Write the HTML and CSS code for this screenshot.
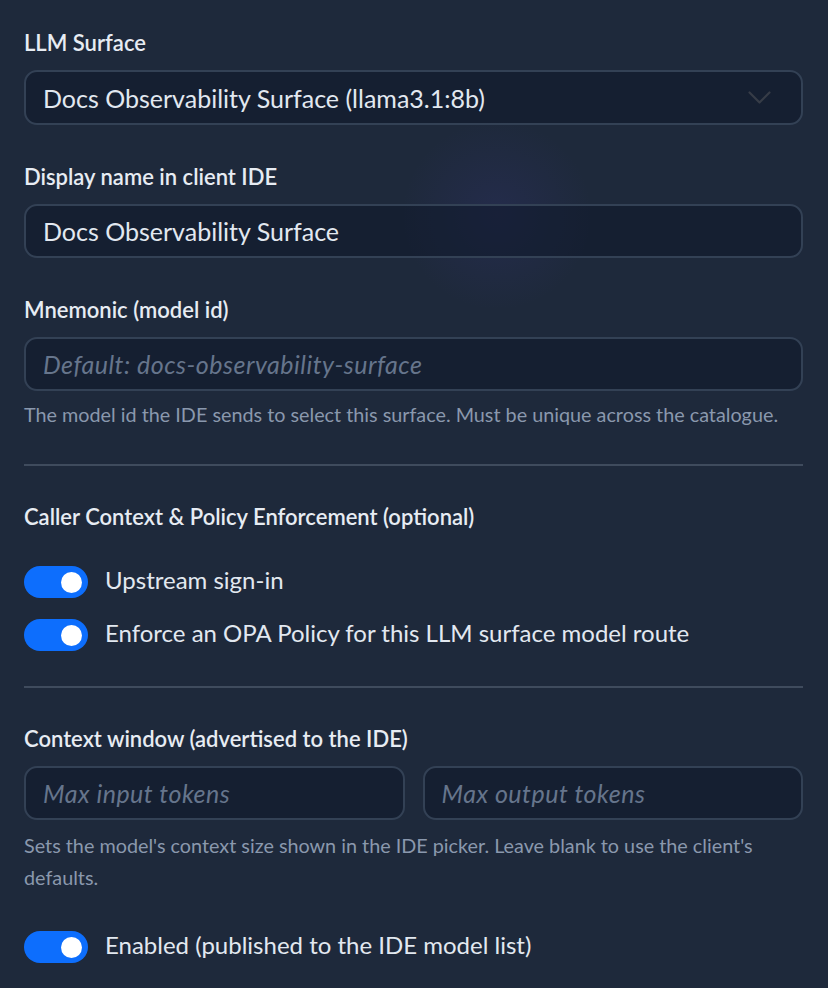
FILE: index.html
```html
<!DOCTYPE html>
<html lang="en">
<head>
<meta charset="utf-8">
<title>LLM Surface</title>
<link rel="stylesheet" href="styles.css">
</head>
<body>
<main class="form">
  <div class="field">
    <label class="label">LLM Surface</label>
    <div class="control select">
      <span class="value">Docs Observability Surface (llama3.1:8b)</span>
      <svg class="chevron" width="23" height="13" viewBox="0 0 23 13" aria-hidden="true"><polyline points="1.5,1.5 11.5,11.5 21.5,1.5" fill="none" stroke="#363c47" stroke-width="2.2" stroke-linecap="round" stroke-linejoin="round"/></svg>
    </div>
  </div>

  <div class="field">
    <label class="label">Display name in client IDE</label>
    <div class="control"><span class="value">Docs Observability Surface</span></div>
  </div>

  <div class="field">
    <label class="label">Mnemonic (model id)</label>
    <div class="control"><span class="placeholder">Default: docs-observability-surface</span></div>
    <p class="help">The model id the IDE sends to select this surface. Must be unique across the catalogue.</p>
  </div>

  <hr class="divider">

  <section class="group">
    <h3 class="label heading">Caller Context &amp; Policy Enforcement (optional)</h3>
    <div class="toggles">
      <div class="toggle-row"><span class="switch"><span class="knob"></span></span><span class="toggle-text">Upstream sign-in</span></div>
      <div class="toggle-row"><span class="switch"><span class="knob"></span></span><span class="toggle-text">Enforce an OPA Policy for this LLM surface model route</span></div>
    </div>
  </section>

  <hr class="divider">

  <div class="field">
    <label class="label">Context window (advertised to the IDE)</label>
    <div class="pair">
      <div class="control"><span class="placeholder">Max input tokens</span></div>
      <div class="control"><span class="placeholder">Max output tokens</span></div>
    </div>
    <p class="help two">Sets the model's context size shown in the IDE picker. Leave blank to use the client's defaults.</p>
  </div>

  <div class="toggle-row last"><span class="switch"><span class="knob"></span></span><span class="toggle-text">Enabled (published to the IDE model list)</span></div>
</main>
</body>
</html>
```

FILE: styles.css
```css
* { box-sizing: border-box; }

html, body {
  margin: 0;
  padding: 0;
}

body {
  width: 828px;
  min-height: 988px;
  background:
    radial-gradient(circle at 497px 215px, rgba(70, 60, 170, 0.15) 0, rgba(70, 60, 170, 0.07) 50px, rgba(70, 60, 170, 0) 95px),
    #1e293b;
  font-family: "Lato", "Noto Sans", sans-serif;
  color: #e2e8f0;
  overflow: hidden;
}

.form {
  padding: 29px 25px 0 24px;
  display: flex;
  flex-direction: column;
}

.field {
  display: flex;
  flex-direction: column;
  margin-bottom: 38px;
}

.label {
  display: block;
  margin: 0 0 13px 0;
  font-size: 22px;
  line-height: 28px;
  font-weight: 600;
  color: #e7ecf3;
}

.control {
  height: 54px;
  border: 2px solid #334155;
  border-radius: 13px;
  background: rgba(15, 23, 42, 0.55);
  display: flex;
  align-items: center;
  padding: 0 17px;
}

.select {
  height: 55px;
  justify-content: space-between;
  padding-right: 30px;
}

.value {
  font-size: 25px;
  color: #e2e8f0;
}

.placeholder {
  font-size: 25px;
  font-style: italic;
  letter-spacing: 0.5px;
  color: #66758c;
}

.chevron { display: block; }

.help {
  margin: 11px 0 0 0;
  font-size: 19.8px;
  line-height: 24px;
  color: #8a98ad;
}

.help.two {
  margin-top: 9px;
  line-height: 32px;
}

.pair {
  display: grid;
  grid-template-columns: 1fr 1fr;
  gap: 18px;
}

.divider {
  margin: 0 0 37px 0;
  border: 0;
  height: 2px;
  background: #3f4b5d;
}

.group {
  margin-bottom: 35px;
}

.heading {
  margin-bottom: 35px;
}

.toggles {
  display: flex;
  flex-direction: column;
  gap: 21px;
}

.toggle-row {
  display: flex;
  align-items: center;
  gap: 17px;
}

.switch {
  width: 64px;
  height: 32px;
  border-radius: 16px;
  background: #0d6efd;
  display: flex;
  align-items: center;
  justify-content: flex-end;
  padding-right: 6px;
  flex: none;
}

.knob {
  width: 21px;
  height: 21px;
  border-radius: 50%;
  background: #ffffff;
}

.toggle-text {
  font-size: 24px;
  color: #e2e8f0;
  line-height: 28px;
  margin-top: -4px;
}
```
